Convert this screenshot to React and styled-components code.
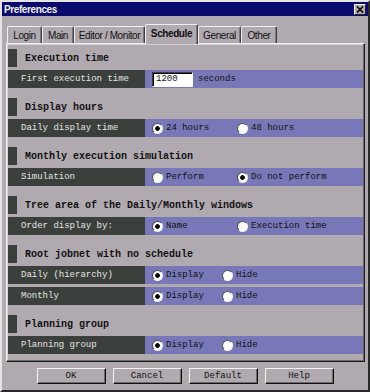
import styled, { createGlobalStyle } from 'styled-components';

const GlobalStyle = createGlobalStyle`
  html, body {
    margin: 0;
    padding: 0;
    background: #b0aab0;
  }
`;

const GRAY = '#b0aab0';
const DARK = '#3c403c';
const PURPLE = '#7878b8';
const MONO = '"Liberation Mono", "DejaVu Sans Mono", monospace';
const SANS = '"Liberation Sans", Arial, sans-serif';

const Window = styled.div`
  width: 370px;
  height: 392px;
  box-sizing: border-box;
  background: ${GRAY};
  border: 2px solid;
  border-color: #e6e2e6 #282828 #282828 #e6e2e6;
  display: flex;
  flex-direction: column;
`;

const TitleBar = styled.div`
  height: 14px;
  background: #0a0a6c;
  display: flex;
  align-items: center;
  justify-content: space-between;
  padding: 0 2px 0 2px;
`;

const Title = styled.span`
  font-family: ${SANS};
  font-size: 10px;
  font-weight: bold;
  letter-spacing: -0.4px;
  color: #f2f2f2;
`;

const CloseButton = styled.div`
  width: 12px;
  height: 11px;
  box-sizing: border-box;
  background: ${GRAY};
  border: 1px solid;
  border-color: #f4f4f4 #202020 #202020 #f4f4f4;
  display: flex;
  align-items: center;
  justify-content: center;
`;

const TabStrip = styled.div`
  display: flex;
  align-items: flex-end;
  height: 19px;
  margin-top: 8px;
  padding-left: 5px;
`;

const Tab = styled.div`
  width: ${p => p.$width}px;
  height: ${p => (p.$active ? 20 : 17)}px;
  margin-bottom: ${p => (p.$active ? -1 : 0)}px;
  box-sizing: border-box;
  background: ${GRAY};
  border-top: 1px solid #f0eef0;
  border-left: 1px solid #f0eef0;
  border-right: 1px solid #404040;
  box-shadow: inset -1px 0 #7a767a;
  border-radius: 2px 2px 0 0;
  display: flex;
  align-items: center;
  justify-content: center;
  padding-bottom: ${p => (p.$active ? 2 : 0)}px;
  font-family: ${SANS};
  font-size: 10px;
  letter-spacing: -0.4px;
  font-weight: ${p => (p.$active ? 'bold' : 'normal')};
  color: #101010;
  white-space: nowrap;
  position: relative;
  z-index: ${p => (p.$active ? 1 : 0)};
`;

const Panel = styled.div`
  width: 359px;
  margin-left: 4px;
  box-sizing: border-box;
  border: 1px solid;
  border-color: #f0eef0 #1c1c1c #1c1c1c #f0eef0;
  box-shadow: inset -1px -1px #6c686c, inset 1px 1px #d6d2d6;
  padding: 5px 1px 7px 1px;
  display: flex;
  flex-direction: column;
  gap: 10px;
`;

const Section = styled.section`
  display: flex;
  flex-direction: column;
  gap: 3px;
`;

const Header = styled.div`
  height: 18px;
  display: flex;
  align-items: center;
  gap: 8px;
`;

const HeaderMark = styled.div`
  width: 9px;
  height: 18px;
  background: ${DARK};
`;

const HeaderText = styled.h2`
  margin: 0;
  font-family: ${MONO};
  font-size: 10px;
  font-weight: bold;
  color: #111;
  white-space: nowrap;
`;

const Row = styled.div`
  height: 18px;
  display: grid;
  grid-template-columns: 137px 1fr;
`;

const Label = styled.div`
  background: ${DARK};
  color: #e4e4e4;
  font-family: ${MONO};
  font-size: 9px;
  display: flex;
  align-items: center;
  padding-left: 13px;
  white-space: nowrap;
`;

const Value = styled.div`
  background: ${PURPLE};
  display: flex;
  align-items: center;
  padding-left: 7px;
  font-family: ${MONO};
  font-size: 9px;
  color: #111;
  white-space: nowrap;
`;

const Option = styled.label`
  min-width: ${p => p.$width}px;
  flex: 0 0 auto;
  display: flex;
  align-items: center;
  gap: 3px;
  white-space: nowrap;
`;

const Radio = styled.span`
  width: 11px;
  height: 11px;
  box-sizing: border-box;
  border-radius: 50%;
  border: 1px solid;
  border-color: #505050 #f4f4f4 #f4f4f4 #505050;
  background: ${p =>
    p.$checked
      ? 'radial-gradient(circle, #000 0 2px, #fff 2.6px)'
      : '#fff'};
  flex-shrink: 0;
`;

const NumberInput = styled.div`
  width: 41px;
  height: 15px;
  box-sizing: border-box;
  background: #fff;
  border: 1px solid;
  border-color: #404040 #fff #fff #404040;
  box-shadow: inset 1px 1px #000;
  padding-left: 3px;
  display: flex;
  align-items: center;
  margin-right: 5px;
`;

const Footer = styled.div`
  display: flex;
  justify-content: center;
  gap: 7px;
  margin-top: 6px;
`;

const Button = styled.button`
  width: 69px;
  height: 16px;
  box-sizing: border-box;
  background: ${GRAY};
  border: 1px solid;
  border-color: #f4f4f4 #101010 #101010 #f4f4f4;
  box-shadow: inset -1px -1px #6c686c;
  font-family: ${MONO};
  font-size: 9px;
  color: #111;
  padding: 0;
`;

const tabs = [
  { name: 'Login', width: 35 },
  { name: 'Main', width: 32 },
  { name: 'Editor / Monitor', width: 71 },
  { name: 'Schedule', width: 53, active: true },
  { name: 'General', width: 43 },
  { name: 'Other', width: 36 },
];

const sections = [
  {
    title: 'Display hours',
    rows: [{ label: 'Daily display time', options: ['24 hours', '48 hours'], checked: 0, width: 85 }],
  },
  {
    title: 'Monthly execution simulation',
    rows: [{ label: 'Simulation', options: ['Perform', 'Do not perform'], checked: 1, width: 85 }],
  },
  {
    title: 'Tree area of the Daily/Monthly windows',
    rows: [{ label: 'Order display by:', options: ['Name', 'Execution time'], checked: 0, width: 85 }],
  },
  {
    title: 'Root jobnet with no schedule',
    rows: [
      { label: 'Daily (hierarchy)', options: ['Display', 'Hide'], checked: 0, width: 70 },
      { label: 'Monthly', options: ['Display', 'Hide'], checked: 0, width: 70 },
    ],
  },
  {
    title: 'Planning group',
    rows: [{ label: 'Planning group', options: ['Display', 'Hide'], checked: 0, width: 70 }],
  },
];

function SectionHeader({ title }) {
  return (
    <Header>
      <HeaderMark />
      <HeaderText>{title}</HeaderText>
    </Header>
  );
}

export default function App() {
  return (
    <>
      <GlobalStyle />
      <Window>
        <TitleBar>
          <Title>Preferences</Title>
          <CloseButton>
            <svg width="8" height="7" viewBox="0 0 8 7">
              <path d="M1 0.5 L7 6.5 M7 0.5 L1 6.5" stroke="#000" strokeWidth="1.6" />
            </svg>
          </CloseButton>
        </TitleBar>
        <TabStrip>
          {tabs.map(t => (
            <Tab key={t.name} $width={t.width} $active={t.active}>
              {t.name}
            </Tab>
          ))}
        </TabStrip>
        <Panel>
          <Section>
            <SectionHeader title="Execution time" />
            <Row>
              <Label>First execution time</Label>
              <Value>
                <NumberInput>1200</NumberInput>
                seconds
              </Value>
            </Row>
          </Section>
          {sections.map(s => (
            <Section key={s.title}>
              <SectionHeader title={s.title} />
              {s.rows.map(r => (
                <Row key={r.label}>
                  <Label>{r.label}</Label>
                  <Value>
                    {r.options.map((o, i) => (
                      <Option key={o} $width={r.width}>
                        <Radio $checked={i === r.checked} />
                        {o}
                      </Option>
                    ))}
                  </Value>
                </Row>
              ))}
            </Section>
          ))}
        </Panel>
        <Footer>
          <Button>OK</Button>
          <Button>Cancel</Button>
          <Button>Default</Button>
          <Button>Help</Button>
        </Footer>
      </Window>
    </>
  );
}
